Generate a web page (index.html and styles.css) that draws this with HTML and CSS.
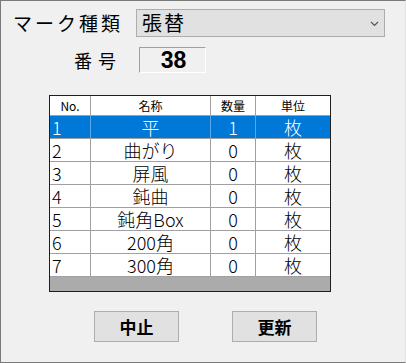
FILE: index.html
```html
<!DOCTYPE html>
<html lang="ja">
<head>
    <meta charset="UTF-8">
    <title>マーク種類</title>
    <link rel="stylesheet" href="styles.css">
</head>
<body>
    <div class="window">
        <div class="field-row">
            <span class="kind-label">マーク種類</span>
            <div class="combo">
                <span class="combo-text">張替</span>
                <svg class="combo-arrow" width="9" height="6" viewBox="0 0 9 6">
                    <path d="M1 1 L4.5 4.5 L8 1" fill="none" stroke="#555" stroke-width="1.2"/>
                </svg>
            </div>
        </div>

        <div class="field-row number-row">
            <span class="number-label">番号</span>
            <div class="number-box">38</div>
        </div>

        <div class="grid">
            <div class="grid-row grid-head">
                <div class="cell">No.</div>
                <div class="cell">名称</div>
                <div class="cell">数量</div>
                <div class="cell">単位</div>
            </div>
            <div class="grid-row selected">
                <div class="cell num">1</div>
                <div class="cell">平</div>
                <div class="cell">1</div>
                <div class="cell">枚</div>
            </div>
            <div class="grid-row">
                <div class="cell num">2</div>
                <div class="cell">曲がり</div>
                <div class="cell">0</div>
                <div class="cell">枚</div>
            </div>
            <div class="grid-row">
                <div class="cell num">3</div>
                <div class="cell">屏風</div>
                <div class="cell">0</div>
                <div class="cell">枚</div>
            </div>
            <div class="grid-row">
                <div class="cell num">4</div>
                <div class="cell">鈍曲</div>
                <div class="cell">0</div>
                <div class="cell">枚</div>
            </div>
            <div class="grid-row">
                <div class="cell num">5</div>
                <div class="cell">鈍角Box</div>
                <div class="cell">0</div>
                <div class="cell">枚</div>
            </div>
            <div class="grid-row">
                <div class="cell num">6</div>
                <div class="cell">200角</div>
                <div class="cell">0</div>
                <div class="cell">枚</div>
            </div>
            <div class="grid-row">
                <div class="cell num">7</div>
                <div class="cell">300角</div>
                <div class="cell">0</div>
                <div class="cell">枚</div>
            </div>
        </div>

        <div class="buttons">
            <button class="btn">中止</button>
            <button class="btn">更新</button>
        </div>
    </div>
</body>
</html>
```

FILE: styles.css
```css
* {
    margin: 0;
    padding: 0;
    box-sizing: border-box;
    font-family: 'Noto Sans CJK JP', 'Noto Sans', sans-serif;
}

body {
    background: #f0f0f0;
}

.window {
    width: 406px;
    height: 363px;
    padding: 8px 0 0 11px;
    background: #f0f0f0;
    border: 1px solid #7a7a7a;
    border-right-color: #e3e3e3;
}

.field-row {
    display: flex;
    align-items: center;
}

.kind-label {
    width: 124px;
    padding-left: 1px;
    font-size: 19px;
    line-height: 28px;
    letter-spacing: 3px;
    color: #000;
}

.combo {
    display: flex;
    align-items: center;
    justify-content: space-between;
    width: 249px;
    height: 28px;
    padding: 0 5px 0 5px;
    background: #e1e1e1;
    border: 1px solid #adadad;
}

.combo-text {
    font-size: 20px;
    line-height: 26px;
    letter-spacing: 2px;
    color: #000;
}

.combo-arrow {
    margin-top: 2px;
}

.number-row {
    margin-top: 10px;
}

.number-label {
    width: 127px;
    padding-left: 62px;
    font-size: 18px;
    line-height: 26px;
    letter-spacing: 6px;
    color: #000;
}

.number-box {
    width: 67px;
    height: 26px;
    padding-left: 2px;
    text-align: center;
    font-family: 'Liberation Sans', Arial, sans-serif;
    font-size: 23px;
    font-weight: bold;
    line-height: 24px;
    color: #000;
    background: #f0f0f0;
    border: 1px solid #fff;
    border-top-color: #a0a0a0;
    border-left-color: #a0a0a0;
}

.grid {
    width: 282px;
    height: 197px;
    margin: 22px 0 0 37px;
    background: #ababab;
    border: 1px solid #1e1e1e;
}

.grid-row {
    display: grid;
    grid-template-columns: 41px 120px 45px 74px;
    height: 23px;
    background: #fff;
    border-bottom: 1px solid #a0a0a0;
}

.cell {
    text-align: center;
    font-size: 18px;
    font-weight: 300;
    line-height: 22px;
    color: #000;
    border-right: 1px solid #a0a0a0;
    white-space: nowrap;
}

.cell:last-child {
    border-right: none;
}

.cell.num {
    text-align: left;
    padding-left: 2px;
}

.grid-head {
    height: 20px;
}

.grid-head .cell {
    font-size: 12px;
    font-weight: normal;
    line-height: 19px;
}

.grid-row.selected {
    background: #0078d7;
}

.grid-row.selected .cell {
    color: #fff;
    border-right-color: #5aa5e3;
}

.buttons {
    display: flex;
    gap: 53px;
    margin: 19px 0 0 82px;
}

.btn {
    width: 85px;
    height: 31px;
    font-size: 17px;
    font-weight: bold;
    color: #000;
    background: #e1e1e1;
    border: 1px solid #adadad;
}
```
